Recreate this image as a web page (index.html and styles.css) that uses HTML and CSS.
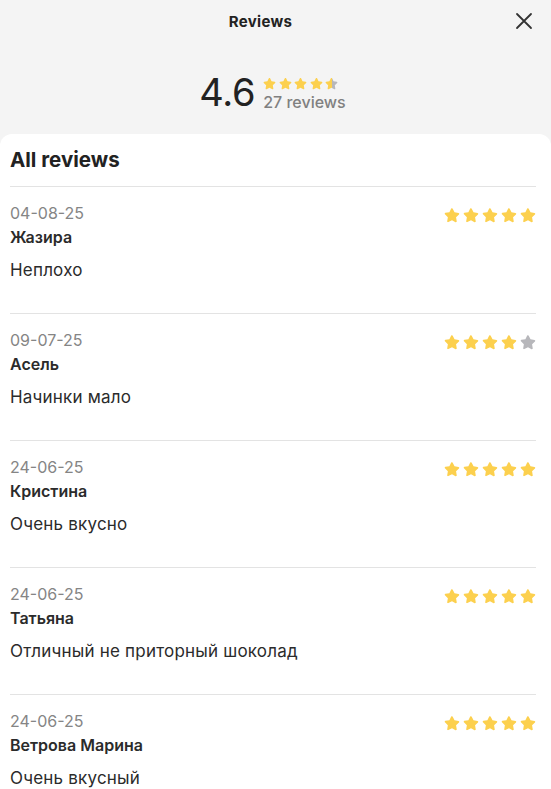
FILE: index.html
```html
<!DOCTYPE html>
<html lang="ru">
<head>
  <meta charset="UTF-8" />
  <title>Reviews</title>
  <link rel="stylesheet" href="styles.css">
</head>
<body>
  <svg width="0" height="0" class="defs">
    <defs>
      <symbol id="star" viewBox="0 0 24 24">
        <path d="M12 1.8c.5 0 .9.3 1.1.7l2.7 5.5 6 .9c.5.1.9.4 1 .9.1.5 0 .9-.3 1.3l-4.4 4.3 1 6c.1.5-.1.9-.5 1.2-.4.3-.9.3-1.3.1L12 19.8l-5.4 2.8c-.4.2-.9.2-1.3-.1-.4-.3-.6-.7-.5-1.2l1-6-4.4-4.3c-.3-.4-.4-.8-.3-1.3.1-.5.5-.8 1-.9l6-.9 2.7-5.5c.3-.4.7-.6 1.2-.6z"/>
      </symbol>
      <linearGradient id="part" x1="0" x2="1" y1="0" y2="0">
        <stop offset="0.58" stop-color="#fcd04e"/>
        <stop offset="0.58" stop-color="#b7b7bb"/>
      </linearGradient>
    </defs>
  </svg>

  <div class="sheet">
    <header class="topbar">
      <h2>Reviews</h2>
      <button class="close" aria-label="Close">
        <svg viewBox="0 0 20 20" width="20" height="20"><path d="M3 3l14 14M17 3L3 17" stroke="#333" stroke-width="1.8" stroke-linecap="round"/></svg>
      </button>
    </header>

    <section class="summary">
      <div class="score">4.6</div>
      <div class="meta">
        <div class="stars small">
          <svg class="on"><use href="#star"/></svg>
          <svg class="on"><use href="#star"/></svg>
          <svg class="on"><use href="#star"/></svg>
          <svg class="on"><use href="#star"/></svg>
          <svg class="half"><use href="#star"/></svg>
        </div>
        <div class="count">27 reviews</div>
      </div>
    </section>

    <main class="card">
      <h1>All reviews</h1>

      <div class="review">
        <div class="info">
          <div class="date">04-08-25</div>
          <div class="name">Жазира</div>
          <p class="text">Неплохо</p>
        </div>
        <div class="stars">
          <svg class="on"><use href="#star"/></svg>
          <svg class="on"><use href="#star"/></svg>
          <svg class="on"><use href="#star"/></svg>
          <svg class="on"><use href="#star"/></svg>
          <svg class="on"><use href="#star"/></svg>
        </div>
      </div>

      <div class="review">
        <div class="info">
          <div class="date">09-07-25</div>
          <div class="name">Асель</div>
          <p class="text">Начинки мало</p>
        </div>
        <div class="stars">
          <svg class="on"><use href="#star"/></svg>
          <svg class="on"><use href="#star"/></svg>
          <svg class="on"><use href="#star"/></svg>
          <svg class="on"><use href="#star"/></svg>
          <svg class="off"><use href="#star"/></svg>
        </div>
      </div>

      <div class="review">
        <div class="info">
          <div class="date">24-06-25</div>
          <div class="name">Кристина</div>
          <p class="text">Очень вкусно</p>
        </div>
        <div class="stars">
          <svg class="on"><use href="#star"/></svg>
          <svg class="on"><use href="#star"/></svg>
          <svg class="on"><use href="#star"/></svg>
          <svg class="on"><use href="#star"/></svg>
          <svg class="on"><use href="#star"/></svg>
        </div>
      </div>

      <div class="review">
        <div class="info">
          <div class="date">24-06-25</div>
          <div class="name">Татьяна</div>
          <p class="text">Отличный не приторный шоколад</p>
        </div>
        <div class="stars">
          <svg class="on"><use href="#star"/></svg>
          <svg class="on"><use href="#star"/></svg>
          <svg class="on"><use href="#star"/></svg>
          <svg class="on"><use href="#star"/></svg>
          <svg class="on"><use href="#star"/></svg>
        </div>
      </div>

      <div class="review">
        <div class="info">
          <div class="date">24-06-25</div>
          <div class="name">Ветрова Марина</div>
          <p class="text">Очень вкусный</p>
        </div>
        <div class="stars">
          <svg class="on"><use href="#star"/></svg>
          <svg class="on"><use href="#star"/></svg>
          <svg class="on"><use href="#star"/></svg>
          <svg class="on"><use href="#star"/></svg>
          <svg class="on"><use href="#star"/></svg>
        </div>
      </div>
    </main>
  </div>
</body>
</html>
```

FILE: styles.css
```css
body {
  margin: 0;
  background-color: #f4f4f4;
  font-family: Inter, "Noto Sans", sans-serif;
  color: #222;
}
.defs {
  position: absolute;
  width: 0;
  height: 0;
}
.sheet {
  height: 789px;
  overflow: hidden;
}
.topbar {
  display: flex;
  align-items: center;
  justify-content: center;
  height: 42px;
  padding-right: 30px;
  position: relative;
}
.topbar h2 {
  margin: 0;
  font-size: 15px;
  font-weight: 700;
  color: #222;
  letter-spacing: 0.3px;
}
.close {
  position: absolute;
  right: 17px;
  top: 11px;
  background: none;
  border: none;
  padding: 0;
  width: 20px;
  height: 20px;
  cursor: pointer;
}
.summary {
  display: flex;
  align-items: center;
  justify-content: center;
  gap: 8px;
  height: 92px;
  padding: 8px 6px 0 0;
  box-sizing: border-box;
}
.score {
  font-size: 38px;
  line-height: 44px;
  font-weight: 400;
  color: #222;
  letter-spacing: -0.3px;
}
.meta {
  display: flex;
  flex-direction: column;
  gap: 3px;
  padding-top: 4px;
}
.count {
  font-size: 16px;
  line-height: 18px;
  color: #808080;
  font-weight: 500;
}
.stars {
  display: flex;
  gap: 3px;
}
.stars svg {
  width: 16px;
  height: 16px;
}
.stars.small {
  gap: 2.5px;
}
.stars.small svg {
  width: 13px;
  height: 13px;
}
.stars .on {
  fill: #fcd04e;
}
.stars .off {
  fill: #b7b7bb;
}
.stars .half {
  fill: url(#part);
}
.card {
  min-height: 655px;
  background-color: #fff;
  border-radius: 12px 12px 0 0;
  padding: 0 15px 0 10px;
}
.card h1 {
  margin: 0;
  padding: 14px 0 14px;
  font-size: 20.5px;
  line-height: 24px;
  font-weight: 700;
  color: #222;
}
.review {
  display: flex;
  justify-content: space-between;
  border-top: 1px solid #e3e3e3;
  padding: 16px 0 32px;
}
.date {
  font-size: 16px;
  line-height: 20px;
  color: #858585;
}
.name {
  margin-top: 4px;
  font-size: 16px;
  line-height: 20px;
  font-weight: 600;
  color: #2b2b2b;
}
.text {
  margin: 12px 0 0;
  font-size: 17px;
  line-height: 22px;
  color: #2b2b2b;
  letter-spacing: 0.2px;
}
.review .stars {
  padding-top: 4px;
}
```
